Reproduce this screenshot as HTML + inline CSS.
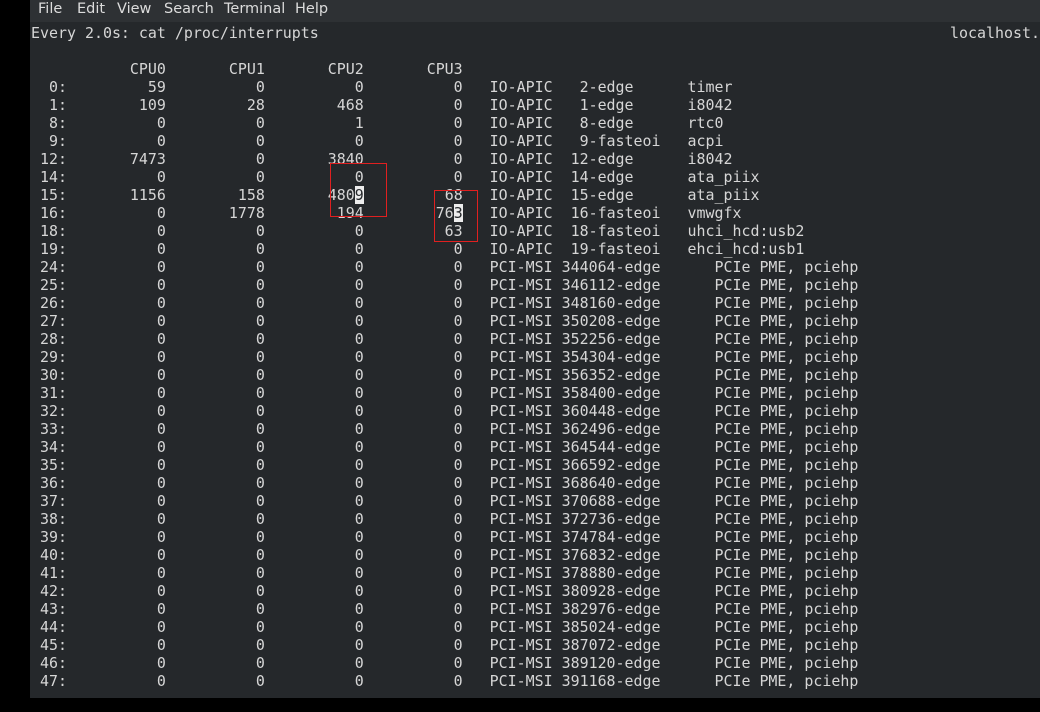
<!DOCTYPE html>
<html><head><meta charset="utf-8"><style>
html,body{margin:0;padding:0;width:1040px;height:712px;background:#000;overflow:hidden;position:relative}
#menu{position:absolute;left:30px;top:0;width:1010px;height:22px;background:#2e3134;font-family:"DejaVu Sans","Liberation Sans",sans-serif;font-size:14.5px;color:#dcdcdc}
#menu span{position:absolute;top:1px}
#term{position:absolute;left:30px;top:22px;width:1010px;height:676px;background:#25282b}
pre{position:absolute;left:31px;top:24px;margin:0;font-family:"DejaVu Sans Mono","Liberation Mono",monospace;font-size:14.94px;line-height:18px;color:#d6d6d6;white-space:pre}
.hl{background:#ececec;color:#25282b}
.box{position:absolute;border:1px solid #e02020}
#lh{position:absolute;left:950px;top:24px;font-family:"DejaVu Sans Mono","Liberation Mono",monospace;font-size:14.94px;line-height:18px;color:#d6d6d6;white-space:pre}
</style></head><body>
<div id="menu"><span style="left:8px">File</span><span style="left:47px">Edit</span><span style="left:87px">View</span><span style="left:134px">Search</span><span style="left:194px">Terminal</span><span style="left:265px">Help</span></div>
<div id="term"></div>
<pre>Every 2.0s: cat /proc/interrupts

           CPU0       CPU1       CPU2       CPU3
  0:         59          0          0          0   IO-APIC   2-edge      timer
  1:        109         28        468          0   IO-APIC   1-edge      i8042
  8:          0          0          1          0   IO-APIC   8-edge      rtc0
  9:          0          0          0          0   IO-APIC   9-fasteoi   acpi
 12:       7473          0       3840          0   IO-APIC  12-edge      i8042
 14:          0          0          0          0   IO-APIC  14-edge      ata_piix
 15:       1156        158       480<span class="hl">9</span>         68   IO-APIC  15-edge      ata_piix
 16:          0       1778        194        76<span class="hl">3</span>   IO-APIC  16-fasteoi   vmwgfx
 18:          0          0          0         63   IO-APIC  18-fasteoi   uhci_hcd:usb2
 19:          0          0          0          0   IO-APIC  19-fasteoi   ehci_hcd:usb1
 24:          0          0          0          0   PCI-MSI 344064-edge      PCIe PME, pciehp
 25:          0          0          0          0   PCI-MSI 346112-edge      PCIe PME, pciehp
 26:          0          0          0          0   PCI-MSI 348160-edge      PCIe PME, pciehp
 27:          0          0          0          0   PCI-MSI 350208-edge      PCIe PME, pciehp
 28:          0          0          0          0   PCI-MSI 352256-edge      PCIe PME, pciehp
 29:          0          0          0          0   PCI-MSI 354304-edge      PCIe PME, pciehp
 30:          0          0          0          0   PCI-MSI 356352-edge      PCIe PME, pciehp
 31:          0          0          0          0   PCI-MSI 358400-edge      PCIe PME, pciehp
 32:          0          0          0          0   PCI-MSI 360448-edge      PCIe PME, pciehp
 33:          0          0          0          0   PCI-MSI 362496-edge      PCIe PME, pciehp
 34:          0          0          0          0   PCI-MSI 364544-edge      PCIe PME, pciehp
 35:          0          0          0          0   PCI-MSI 366592-edge      PCIe PME, pciehp
 36:          0          0          0          0   PCI-MSI 368640-edge      PCIe PME, pciehp
 37:          0          0          0          0   PCI-MSI 370688-edge      PCIe PME, pciehp
 38:          0          0          0          0   PCI-MSI 372736-edge      PCIe PME, pciehp
 39:          0          0          0          0   PCI-MSI 374784-edge      PCIe PME, pciehp
 40:          0          0          0          0   PCI-MSI 376832-edge      PCIe PME, pciehp
 41:          0          0          0          0   PCI-MSI 378880-edge      PCIe PME, pciehp
 42:          0          0          0          0   PCI-MSI 380928-edge      PCIe PME, pciehp
 43:          0          0          0          0   PCI-MSI 382976-edge      PCIe PME, pciehp
 44:          0          0          0          0   PCI-MSI 385024-edge      PCIe PME, pciehp
 45:          0          0          0          0   PCI-MSI 387072-edge      PCIe PME, pciehp
 46:          0          0          0          0   PCI-MSI 389120-edge      PCIe PME, pciehp
 47:          0          0          0          0   PCI-MSI 391168-edge      PCIe PME, pciehp</pre>
<div id="lh">localhost.</div>
<div class="box" style="left:330px;top:163px;width:55px;height:52px"></div>
<div class="box" style="left:434px;top:190px;width:42px;height:50px"></div>
</body></html>
